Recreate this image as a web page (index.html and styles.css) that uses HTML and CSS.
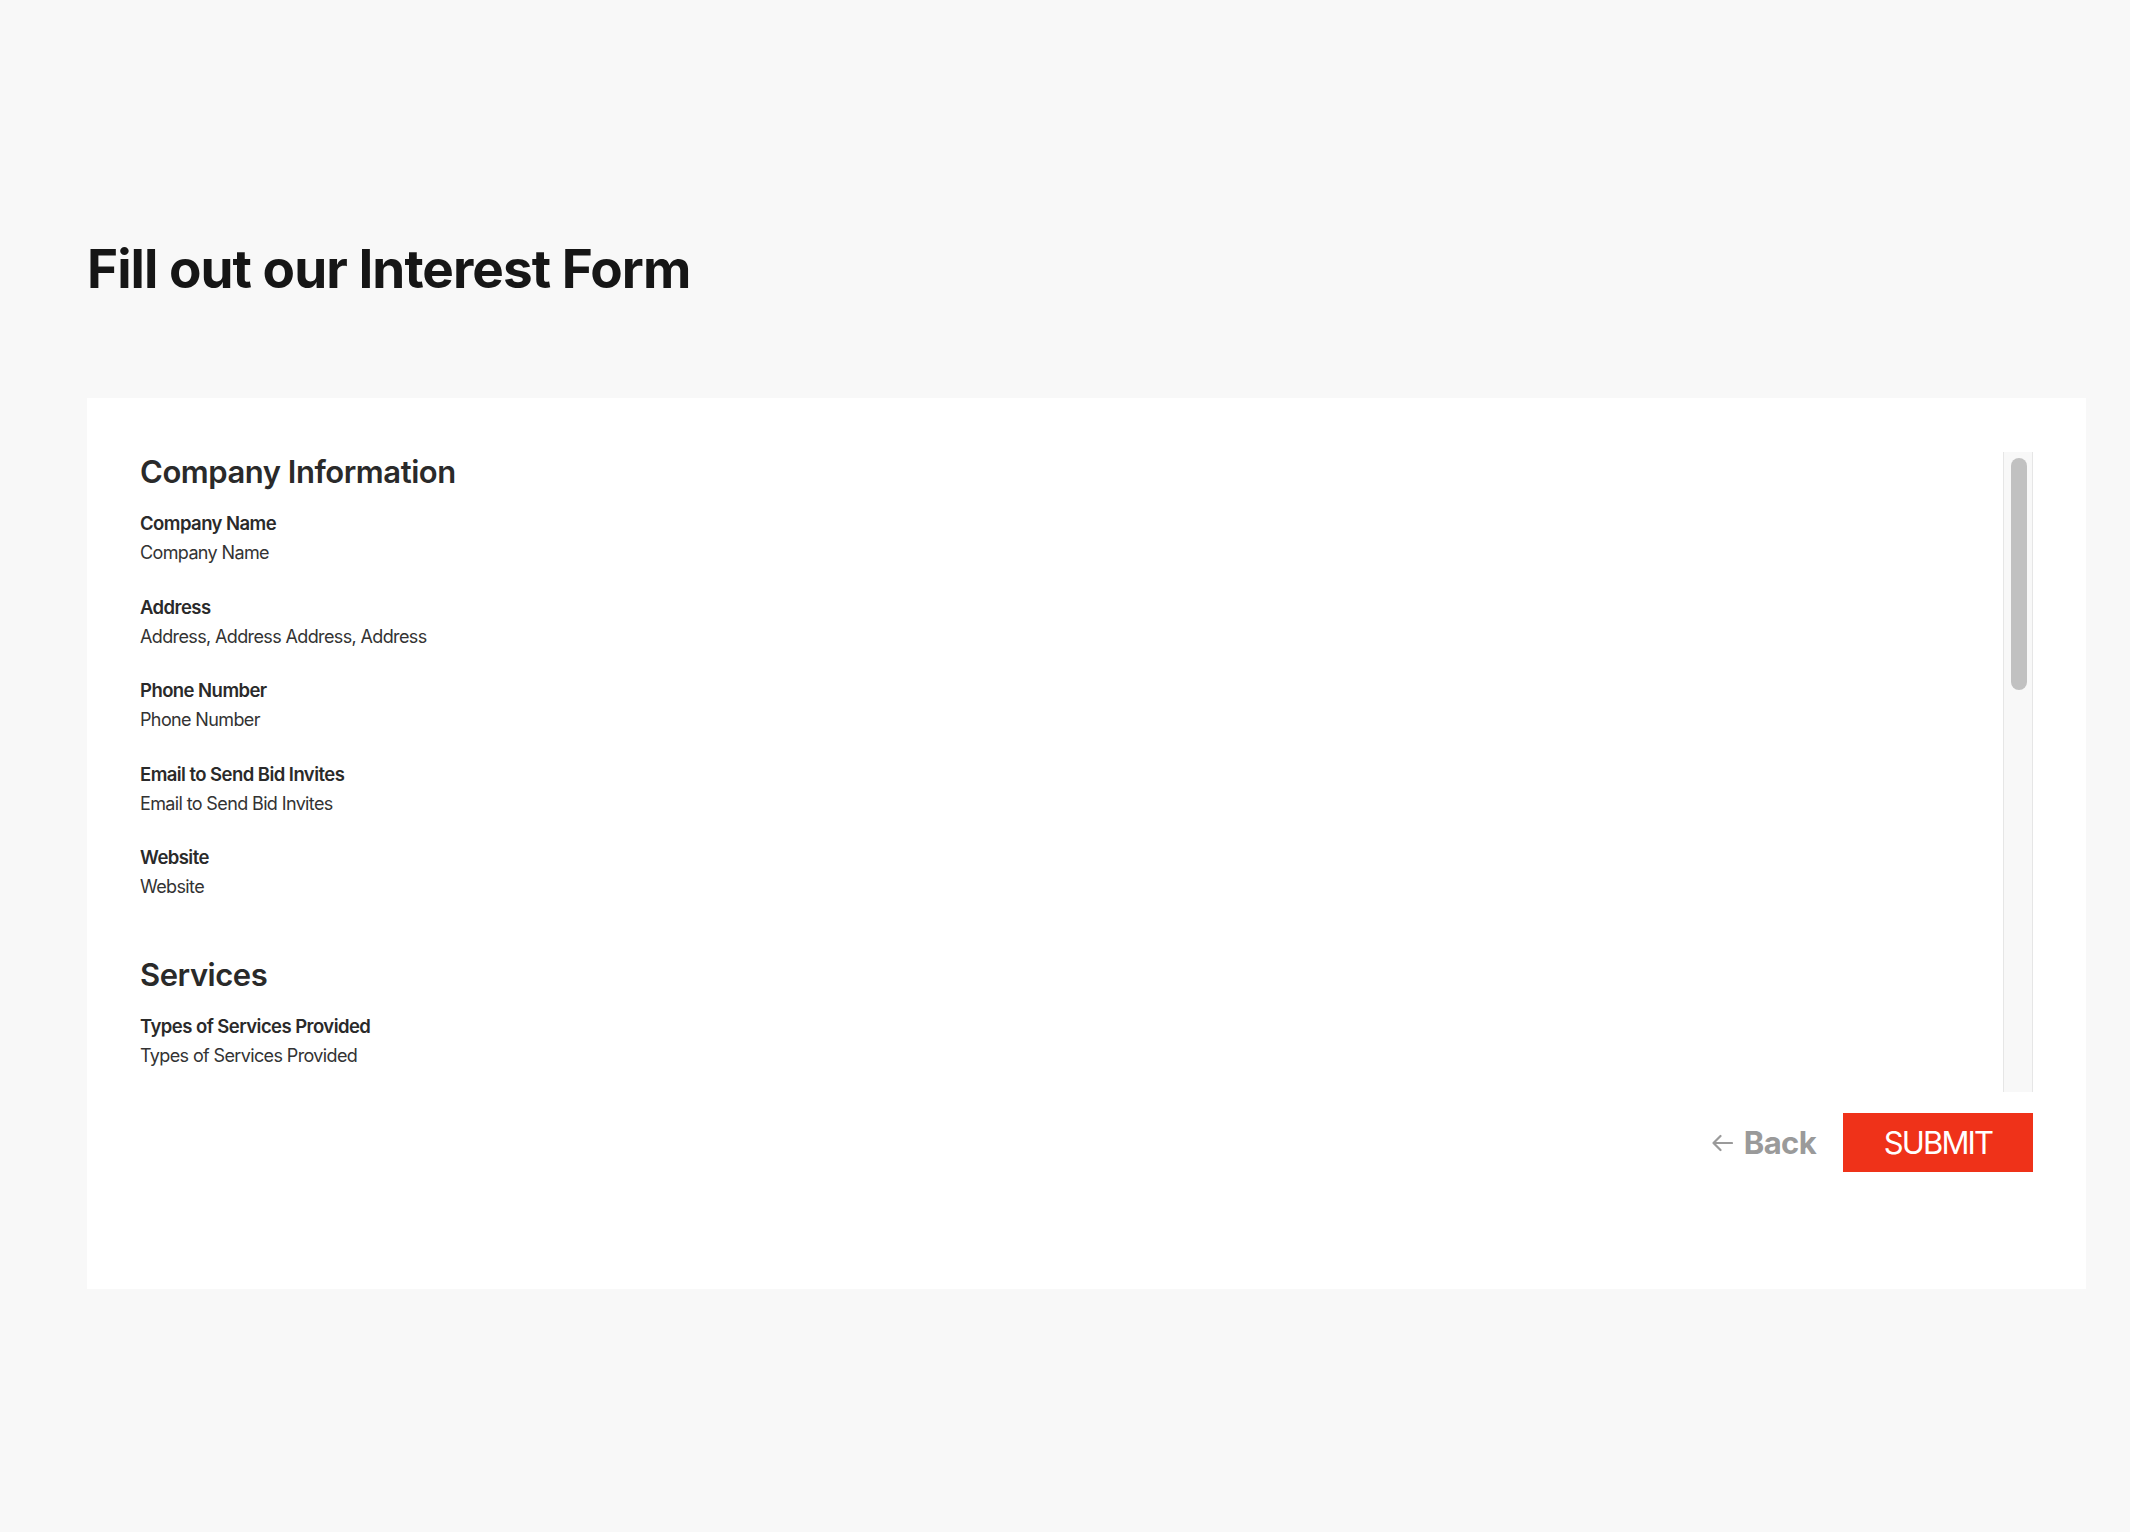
FILE: index.html
```html
<!DOCTYPE html>
<html lang="en">
<head>
  <meta charset="UTF-8">
  <meta name="viewport" content="width=device-width, initial-scale=1.0">
  <title>Interest Form</title>
  <link rel="stylesheet" href="styles.css">
</head>
<body>
  <main class="page">
    <h1 class="page-title">Fill out our Interest Form</h1>

    <section class="form-card">
      <div class="form-body">
        <div class="form-scroll">
          <div class="form-section">
            <h2 class="section-title">Company Information</h2>
            <div class="field">
              <div class="field-label">Company Name</div>
              <div class="field-value">Company Name</div>
            </div>
            <div class="field">
              <div class="field-label">Address</div>
              <div class="field-value">Address, Address Address, Address</div>
            </div>
            <div class="field">
              <div class="field-label">Phone Number</div>
              <div class="field-value">Phone Number</div>
            </div>
            <div class="field">
              <div class="field-label">Email to Send Bid Invites</div>
              <div class="field-value">Email to Send Bid Invites</div>
            </div>
            <div class="field">
              <div class="field-label">Website</div>
              <div class="field-value">Website</div>
            </div>
          </div>

          <div class="form-section">
            <h2 class="section-title">Services</h2>
            <div class="field">
              <div class="field-label">Types of Services Provided</div>
              <div class="field-value">Types of Services Provided</div>
            </div>
          </div>
        </div>

        <!-- scroll track -->
        <div class="scrollbar">
          <div class="scrollbar-thumb"></div>
        </div>
      </div>

      <div class="form-actions">
        <button class="btn-back" type="button">
          <svg class="back-icon" width="22" height="18" viewBox="0 0 22 18" fill="none">
            <path d="M21 9H2.5M9.5 2L2.5 9l7 7" stroke="currentColor" stroke-width="2.2" stroke-linecap="round" stroke-linejoin="round"/>
          </svg>
          Back
        </button>
        <button class="btn-submit" type="submit">SUBMIT</button>
      </div>
    </section>
  </main>
</body>
</html>
```

FILE: styles.css
```css
body {
  font-family: Inter, "Liberation Sans", sans-serif;
  margin: 0;
  background-color: #f8f8f8;
  color: #2b2b2b;
}
.page {
  padding: 237px 44px 0 87px;
}
.page-title {
  margin: 0 0 97px;
  font-size: 53px;
  line-height: 64px;
  font-weight: 700;
  letter-spacing: -0.018em;
  color: #161616;
}
.form-card {
  background-color: #fff;
  padding: 54px 53px 117px;
}
.form-body {
  display: flex;
  height: 640px;
}
.form-scroll {
  flex: 1;
  overflow: hidden;
}
.scrollbar {
  width: 16px;
  padding: 6px 5px 0 7px;
  background-color: #f8f8f8;
  border-left: 1px solid #e6e6e6;
  border-right: 1px solid #e6e6e6;
}
.scrollbar-thumb {
  height: 232px;
  border-radius: 8px;
  background-color: #c1c1c1;
}
.form-section + .form-section {
  margin-top: 56px;
}
.section-title {
  margin: 0 0 20px;
  padding-top: 1px;
  font-size: 31px;
  line-height: 38px;
  font-weight: 600;
  letter-spacing: -0.015em;
  color: #2a2a2a;
}
.field + .field {
  margin-top: 29.5px;
}
.field-label {
  font-size: 18.5px;
  line-height: 24px;
  font-weight: 600;
  letter-spacing: -0.03em;
  color: #2a2a2a;
}
.field-value {
  margin-top: 6px;
  font-size: 18px;
  line-height: 24px;
  letter-spacing: -0.035em;
  color: #333;
}
.form-actions {
  display: flex;
  justify-content: flex-end;
  align-items: center;
  gap: 27px;
  margin-top: 21px;
}
.btn-back {
  display: flex;
  align-items: center;
  gap: 11px;
  padding: 0;
  background: none;
  border: 0;
  font-family: inherit;
  font-size: 31px;
  font-weight: 700;
  letter-spacing: -0.02em;
  color: #9a9a9a;
  cursor: pointer;
}
.btn-submit {
  width: 190px;
  height: 59px;
  background-color: #ef3219;
  border: 0;
  font-family: inherit;
  font-size: 31px;
  font-weight: 400;
  letter-spacing: -0.06em;
  color: #fff;
  cursor: pointer;
}
```
